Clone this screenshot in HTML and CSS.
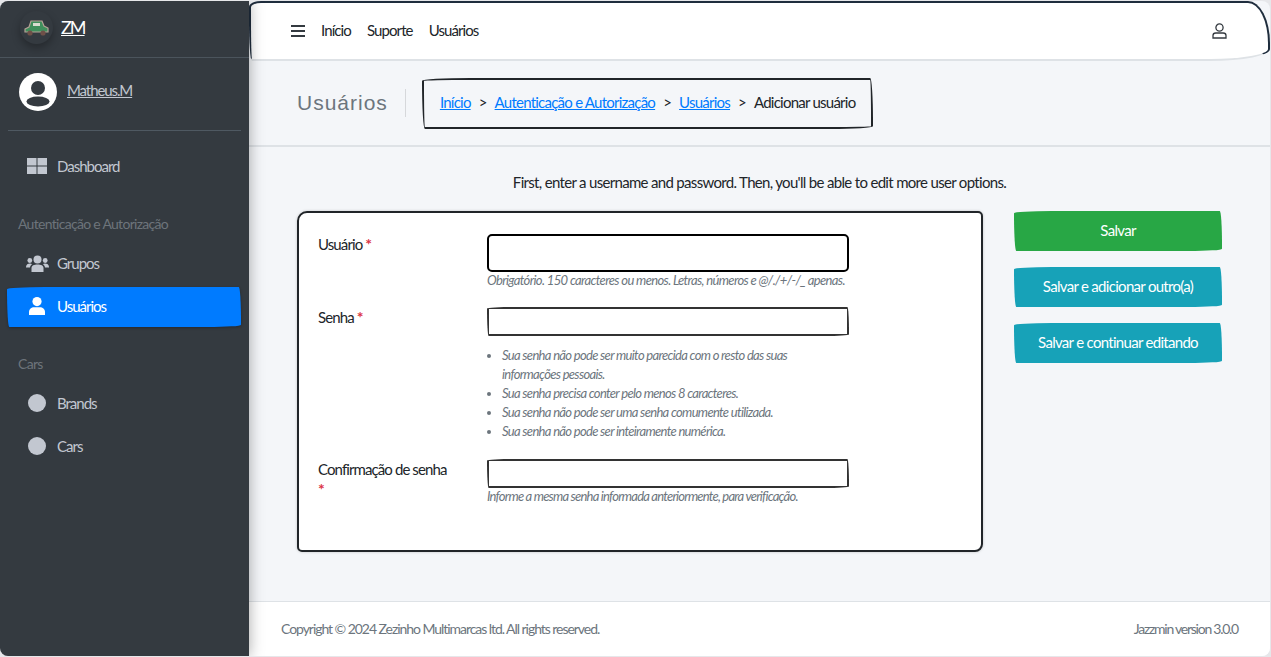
FILE: index.html
```html
<!DOCTYPE html>
<html>
  <head>
    <title>Adicionar usuário</title>
    <link rel="stylesheet" href="styles.css">
  </head>
  <body>
    <div class="wrapper">
      <aside class="sidebar">
        <a class="brand" href="#">
          <span class="brand-logo">
            <svg width="25" height="16" viewBox="0 0 25 16">
              <path d="M1 9 L5 7 L7 1 L18 1 L20 6 L24 8 L24 12 L1 12 Z" fill="#3f8f5c" stroke="#b5a296" stroke-width="1.2"/>
              <rect x="9" y="3" width="7" height="3" fill="#d8dcd0"/>
              <circle cx="6" cy="13" r="2.6" fill="#6e5048"/>
              <circle cx="19" cy="13" r="2.6" fill="#6e5048"/>
            </svg>
          </span>
          <span class="brand-text">ZM</span>
        </a>
        <div class="user-panel">
          <svg class="avatar" width="38" height="38" viewBox="0 0 38 38">
            <circle cx="19" cy="19" r="19" fill="#fff"/>
            <circle cx="19" cy="15" r="7" fill="#343a40"/>
            <ellipse cx="19" cy="28.5" rx="11.5" ry="5" fill="#343a40"/>
          </svg>
          <a class="user-name" href="#">Matheus.M</a>
        </div>
        <nav class="side-nav">
          <a class="nav-item first" href="#">
            <span class="nav-icon">
              <svg width="20" height="16" viewBox="0 0 20 16" fill="#c2c7d0">
                <rect x="0" y="0" width="9.5" height="7.5"/>
                <rect x="10.5" y="0" width="9.5" height="7.5"/>
                <rect x="0" y="8.5" width="9.5" height="7.5"/>
                <rect x="10.5" y="8.5" width="9.5" height="7.5"/>
              </svg>
            </span>
            Dashboard
          </a>
          <div class="nav-header">Autenticação e Autorização</div>
          <a class="nav-item" href="#">
            <span class="nav-icon">
              <svg width="23" height="17" viewBox="0 0 23 17" fill="#c2c7d0">
                <circle cx="11.5" cy="4.5" r="4"/>
                <circle cx="3.8" cy="5.5" r="2.4"/>
                <circle cx="19.2" cy="5.5" r="2.4"/>
                <path d="M5.5 17 V13 C5.5 10.5 8 9.5 11.5 9.5 C15 9.5 17.5 10.5 17.5 13 V17 Z"/>
                <path d="M0 12 C0 9.5 2 8.5 4 8.5 C5 8.5 5.6 8.8 6 9.2 C4.8 10 4.2 11 4 12.5 H0 Z"/>
                <path d="M23 12 C23 9.5 21 8.5 19 8.5 C18 8.5 17.4 8.8 17 9.2 C18.2 10 18.8 11 19 12.5 H23 Z"/>
              </svg>
            </span>
            Grupos
          </a>
          <a class="nav-item active" href="#">
            <span class="nav-icon">
              <svg width="16" height="18" viewBox="0 0 16 18" fill="#fff">
                <circle cx="8" cy="4.6" r="4.6"/>
                <path d="M0 18 V15 C0 12 2.5 10.3 5 10.3 H11 C13.5 10.3 16 12 16 15 V18 Z"/>
              </svg>
            </span>
            Usuários
          </a>
          <div class="nav-header">Cars</div>
          <a class="nav-item" href="#"><span class="nav-icon"><span class="nav-dot"></span></span>Brands</a>
          <a class="nav-item" href="#"><span class="nav-icon"><span class="nav-dot"></span></span>Cars</a>
        </nav>
      </aside>

      <div class="main">
        <header class="navbar">
          <svg class="menu-icon" width="14" height="12" viewBox="0 0 14 12" fill="#343a40">
            <rect width="14" height="2"/>
            <rect y="5" width="14" height="2"/>
            <rect y="10" width="14" height="2"/>
          </svg>
          <a href="#">Início</a>
          <a href="#">Suporte</a>
          <a href="#">Usuários</a>
          <svg class="account-icon" width="15" height="16" viewBox="0 0 15 16" fill="none" stroke="#343a40" stroke-width="1.3">
            <circle cx="7.5" cy="4.5" r="3.6"/>
            <path d="M1 15 V12.5 C1 11 2.2 10 3.8 10 H11.2 C12.8 10 14 11 14 12.5 V15 Z"/>
          </svg>
        </header>

        <div class="page-header">
          <h1>Usuários</h1>
          <ol class="breadcrumb">
            <li><a href="#">Início</a></li>
            <li>&gt;</li>
            <li><a href="#">Autenticação e Autorização</a></li>
            <li>&gt;</li>
            <li><a href="#">Usuários</a></li>
            <li>&gt;</li>
            <li>Adicionar usuário</li>
          </ol>
        </div>

        <section class="content">
          <p class="intro">First, enter a username and password. Then, you'll be able to edit more user options.</p>
          <div class="columns">
            <form class="card">
              <div class="field field-user">
                <label>Usuário <span class="req">*</span></label>
                <div class="control">
                  <input class="input-focus" type="text">
                  <div class="help">Obrigatório. 150 caracteres ou menos. Letras, números e @/./+/-/_ apenas.</div>
                </div>
              </div>
              <div class="field field-pass">
                <label>Senha <span class="req">*</span></label>
                <div class="control">
                  <input type="password">
                  <ul class="help-list">
                    <li>Sua senha não pode ser muito parecida com o resto das suas informações pessoais.</li>
                    <li>Sua senha precisa conter pelo menos 8 caracteres.</li>
                    <li>Sua senha não pode ser uma senha comumente utilizada.</li>
                    <li>Sua senha não pode ser inteiramente numérica.</li>
                  </ul>
                </div>
              </div>
              <div class="field">
                <label>Confirmação de senha <span class="req">*</span></label>
                <div class="control">
                  <input type="password">
                  <div class="help help-tight">Informe a mesma senha informada anteriormente, para verificação.</div>
                </div>
              </div>
            </form>
            <div class="actions">
              <button class="btn btn-success" type="button">Salvar</button>
              <button class="btn btn-info" type="button">Salvar e adicionar outro(a)</button>
              <button class="btn btn-info" type="button">Salvar e continuar editando</button>
            </div>
          </div>
        </section>

        <footer class="footer">
          <span>Copyright © 2024 Zezinho Multimarcas ltd. All rights reserved.</span>
          <span class="version">Jazzmin version 3.0.0</span>
        </footer>
      </div>
    </div>
  </body>
</html>
```

FILE: styles.css
```css
* {
  margin: 0;
  padding: 0;
  box-sizing: border-box;
}

html,
body {
  height: 100%;
  overflow: hidden;
}

body {
  background-color: #e6e7ea;
  color: #212529;
  font-family: Lato, "Liberation Sans", sans-serif;
  font-size: 15px;
  line-height: 1.5;
  letter-spacing: -0.7px;
  padding: 1px 1px 1px 0;
}

a {
  color: inherit;
}

.wrapper {
  display: flex;
  height: 655px;
  background-color: #f4f6f9;
  border-radius: 8px;
  overflow: hidden;
}

/* Sidebar */
.sidebar {
  width: 249px;
  flex-shrink: 0;
  background-color: #343a40;
  color: #c2c7d0;
  box-shadow: 0 0 14px rgba(0, 0, 0, 0.35);
  z-index: 2;
}

.brand {
  display: flex;
  align-items: center;
  gap: 8px;
  height: 57px;
  padding: 0 0 3px 20px;
  color: #fff;
  border-bottom: 1px solid #4b545c;
}

.brand-text {
  font-size: 18px;
  letter-spacing: -2px;
}

.brand-logo {
  display: flex;
  align-items: center;
  justify-content: center;
  width: 33px;
  height: 33px;
  border-radius: 50%;
  box-shadow: 0 4px 8px rgba(0, 0, 0, 0.3);
}

.user-panel {
  display: flex;
  align-items: center;
  gap: 10px;
  height: 73px;
  margin: 0 8px;
  padding: 0 0 5px 11px;
  border-bottom: 1px solid #4f5962;
}

.user-name {
  color: #c2c7d0;
  letter-spacing: -1.1px;
  padding-bottom: 3px;
}

.side-nav {
  padding: 0 8px 0 7px;
}

.nav-item {
  display: flex;
  align-items: center;
  height: 40px;
  margin-bottom: 3px;
  padding: 0 0 2px 15px;
  color: #c2c7d0;
  letter-spacing: -1px;
  text-decoration: none;
}

.nav-item.first {
  margin-top: 16px;
}

.nav-icon {
  display: flex;
  justify-content: center;
  align-items: center;
  width: 30px;
  margin-right: 5px;
  flex-shrink: 0;
}

.nav-dot {
  width: 18px;
  height: 18px;
  border-radius: 50%;
  background-color: #c2c7d0;
}

.nav-item.active {
  background-color: #007bff;
  color: #fff;
  box-shadow: 0 1px 3px rgba(0, 0, 0, 0.3);
  border-radius: 255px 15px 225px 15px / 15px 225px 15px 255px;
}

.nav-header {
  height: 36px;
  margin-top: 21px;
  padding: 5px 0 0 11px;
  color: #6d747b;
  font-size: 14px;
}

/* Top navbar */
.navbar {
  display: flex;
  align-items: center;
  gap: 16px;
  height: 60px;
  padding-left: 40px;
  background-color: #fff;
  border-top: 2px solid #1f2d3d;
  border-left: 2px solid #1f2d3d;
  border-right: 2px solid #1f2d3d;
  border-bottom: 2px solid #dee2e6;
  border-radius: 12px 22px 60px 3px / 6px 42px 12px 40px;
  letter-spacing: -0.9px;
}

.navbar a {
  padding-bottom: 2px;
  text-decoration: none;
}

.account-icon {
  margin-left: auto;
  margin-right: 41px;
}

/* Page header */
.page-header {
  display: flex;
  align-items: center;
  height: 86px;
  padding-left: 48px;
  border-bottom: 2px solid #dee2e6;
}

.page-header h1 {
  height: 28px;
  padding-right: 17px;
  margin-right: 16px;
  border-right: 1px solid #d6d8db;
  color: #6c757d;
  font-family: "Liberation Sans", sans-serif;
  font-size: 21px;
  font-weight: 400;
  line-height: 27px;
  letter-spacing: 1px;
}

.breadcrumb {
  display: flex;
  align-items: center;
  gap: 8px;
  height: 51px;
  padding: 0 16px 2px;
  list-style: none;
  border: 2px solid #212529;
  border-radius: 255px 15px 225px 15px / 15px 225px 15px 255px;
  letter-spacing: -0.76px;
}

.breadcrumb a {
  color: #007bff;
}

/* Content */
.content {
  flex: 1;
  padding: 0 48px;
}

.intro {
  margin: 24px 0 17px;
  text-align: center;
  letter-spacing: -0.68px;
}

.columns {
  display: flex;
  align-items: flex-start;
  gap: 31px;
}

.card {
  width: 686px;
  height: 341px;
  padding: 21px 19px;
  background-color: #fff;
  border: 2px solid #212529;
  border-radius: 10px 5px 8px 5px;
  box-shadow: 0 0 3px rgba(0, 0, 0, 0.2);
  flex-shrink: 0;
}

.field {
  display: flex;
}

.field-user {
  margin-bottom: 19px;
}

.field-pass {
  margin-bottom: 18px;
}

.field label {
  width: 169px;
  flex-shrink: 0;
  padding-right: 36px;
  line-height: 20px;
  letter-spacing: -0.9px;
}

.req {
  color: #dc3545;
  font-size: 16px;
  font-weight: 700;
  line-height: 14px;
}

.control {
  width: 362px;
}

.control input {
  display: block;
  width: 100%;
  height: 29px;
  background-color: #fff;
  border: 2px solid #333;
  border-radius: 255px 15px 225px 15px / 15px 225px 15px 255px;
}

.control .input-focus {
  height: 38px;
  border-color: #000;
  border-radius: 5px;
}

.help {
  color: #6c757d;
  font-size: 13px;
  font-style: italic;
  line-height: 16px;
  letter-spacing: -0.64px;
}

.help-tight {
  letter-spacing: -0.78px;
}

.help-list {
  margin: 10px 30px 0 15px;
  color: #6c757d;
  font-size: 13px;
  font-style: italic;
  line-height: 19px;
  letter-spacing: -0.68px;
}

.actions {
  display: flex;
  flex-direction: column;
  gap: 16px;
  width: 209px;
}

.btn {
  height: 40px;
  padding-bottom: 2px;
  border: none;
  color: #fff;
  font-family: inherit;
  font-size: 15px;
  letter-spacing: -0.7px;
  border-radius: 255px 15px 225px 15px / 15px 225px 15px 255px;
}

.btn-success {
  background-color: #28a745;
}

.btn-info {
  background-color: #17a2b8;
}

/* Footer */
.footer {
  display: flex;
  justify-content: space-between;
  align-items: center;
  height: 55px;
  padding: 0 32px 2px;
  background-color: #fff;
  border-top: 1px solid #dee2e6;
  color: #6c757d;
  font-size: 14px;
  letter-spacing: -1.05px;
}

.version {
  letter-spacing: -1.25px;
}

.main {
  flex: 1;
  display: flex;
  flex-direction: column;
  min-width: 0;
}
```
